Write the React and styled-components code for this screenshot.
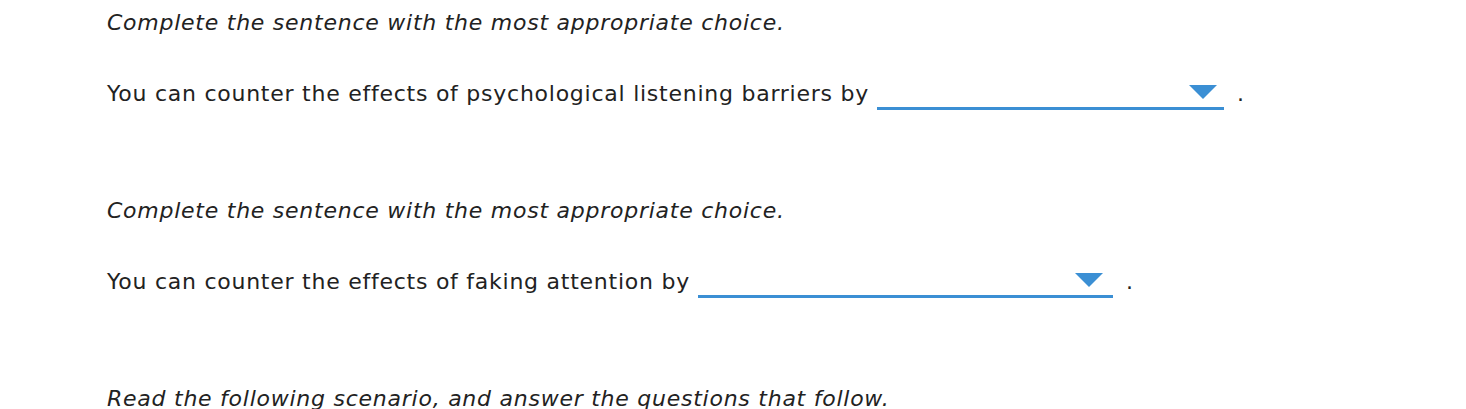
import React from "react";
import styled, { createGlobalStyle } from "styled-components";

const Global = createGlobalStyle`
  html, body { margin: 0; padding: 0; background: #fff; }
  body { font-family: "DejaVu Sans", Verdana, sans-serif; color: #222; }
`;

const Page = styled.div`
  padding: 10px 0 0 107px;
  font-size: 22px;
  line-height: 26px;
  letter-spacing: 0.75px;
`;

const Question = styled.section`
  margin-bottom: 88px;
`;

const Instruction = styled.p`
  margin: 0 0 45px;
  font-style: italic;
`;

const Sentence = styled.div`
  display: flex;
  align-items: flex-start;
  white-space: nowrap;
`;

const Dropdown = styled.div`
  box-sizing: border-box;
  width: ${(p) => p.$width}px;
  height: 29px;
  margin-left: ${(p) => p.$gap}px;
  border-bottom: 3px solid #3b8fd4;
  display: flex;
  justify-content: flex-end;
  align-items: flex-start;
  padding: 4px ${(p) => p.$pad}px 0 0;
  cursor: pointer;
`;

const Period = styled.span`
  margin-left: ${(p) => p.$gap}px;
`;

const Arrow = () => (
  <svg width="28" height="14" viewBox="0 0 28 14">
    <polygon points="0,0 28,0 14,14" fill="#3b8fd4" />
  </svg>
);

const Item = ({ text, width, gap, pad, pgap }) => (
  <Question>
    <Instruction>Complete the sentence with the most appropriate choice.</Instruction>
    <Sentence>
      <span>{text}</span>
      <Dropdown $width={width} $gap={gap} $pad={pad}>
        <Arrow />
      </Dropdown>
      <Period $gap={pgap}>.</Period>
    </Sentence>
  </Question>
);

export default function App() {
  return (
    <>
      <Global />
      <Page>
        <Item
          text="You can counter the effects of psychological listening barriers by"
          width={347}
          gap={8}
          pad={7}
          pgap={13}
        />
        <Item
          text="You can counter the effects of faking attention by"
          width={415}
          gap={8}
          pad={10}
          pgap={13}
        />
        <Instruction>Read the following scenario, and answer the questions that follow.</Instruction>
      </Page>
    </>
  );
}
